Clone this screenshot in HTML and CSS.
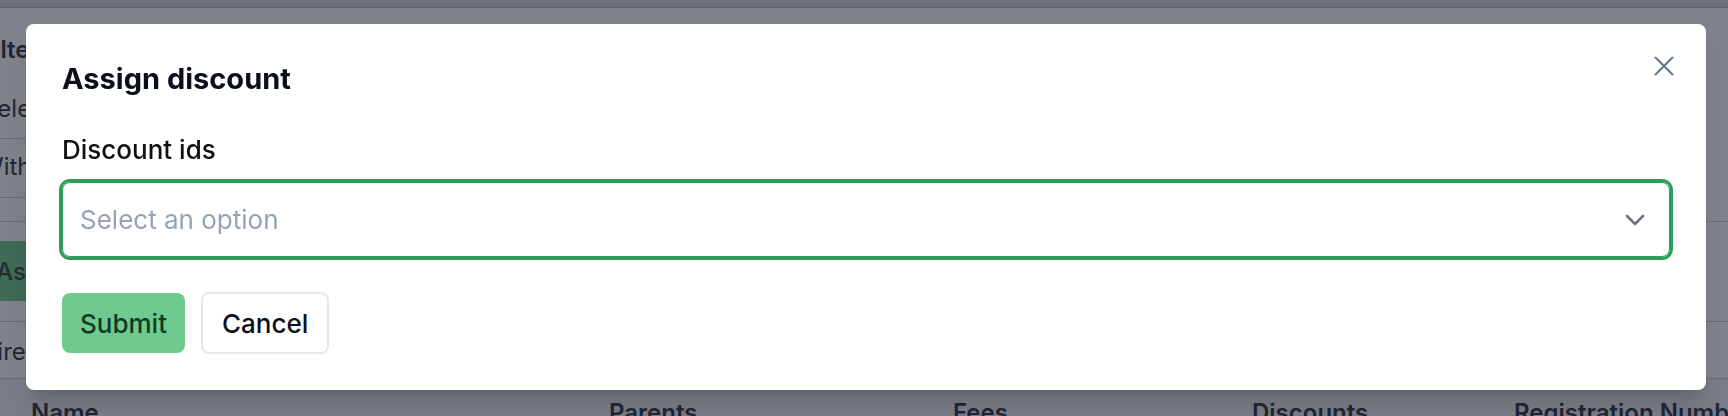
FILE: index.html
```html
<!DOCTYPE html>
<html lang="en">
<head>
  <meta charset="UTF-8">
  <meta name="viewport" content="width=device-width, initial-scale=1">
  <title>Students</title>
  <link rel="stylesheet" href="styles.css">
</head>
<body>
  <div class="page">
    <div class="topbar"></div>
    <div class="filters">
      <h2 class="filters-title">Filters</h2>
      <div class="filter-row first">Deleted</div>
      <div class="filter-row second">With discount</div>
      <div class="spacer-row"></div>
      <div class="bulk-row"><button class="bulk-btn">Assign discount</button></div>
      <div class="filter-row selected">Direct debit</div>
    </div>
    <div class="table-head">
      <span>Name</span>
      <span>Parents</span>
      <span>Fees</span>
      <span>Discounts</span>
      <span>Registration Number</span>
    </div>
  </div>

  <div class="overlay">
    <form class="modal" id="assign-discount">
      <button type="button" class="close" aria-label="Close">
        <svg width="20" height="20" viewBox="0 0 20 20"><path d="M1 1L19 19M19 1L1 19" /></svg>
      </button>
      <h2 class="modal-title">Assign discount</h2>
      <label class="field-label" for="discount_ids">Discount ids</label>
      <div class="select" id="discount_ids" tabindex="0">
        <span class="placeholder">Select an option</span>
        <svg class="chevron" width="20" height="12" viewBox="0 0 20 12"><path d="M2 2l8 8 8-8" /></svg>
      </div>
      <div class="actions">
        <button type="submit" class="btn btn-submit">Submit</button>
        <button type="button" class="btn btn-cancel">Cancel</button>
      </div>
    </form>
  </div>
</body>
</html>
```

FILE: styles.css
```css
body { margin: 0; width: 1728px; height: 416px; overflow: hidden; background: #fff; font-family: Inter, "Noto Sans", sans-serif; color: #111827; }

/* page behind the dialog */
.page { width: 1728px; height: 416px; overflow: hidden; }
.topbar { height: 7px; background: #d6d7da; border-bottom: 1px solid #a9acb3; }
.filters { margin-left: -20px; font-size: 24px; line-height: 30px; white-space: nowrap; }
.filters-title { margin: 0; padding-top: 27px; font-size: 24px; font-weight: 600; line-height: 30px; }
.filter-row { border-bottom: 1px solid #c6c8cd; }
.filter-row.first { width: 420px; height: 44px; padding-top: 29px; }
.filter-row.second { width: 420px; height: 45px; padding-top: 13px; }
.spacer-row { height: 23px; border-bottom: 1px solid #c6c8cd; }
.bulk-row { height: 100px; padding-top: 19px; box-sizing: border-box; border-bottom: 1px solid #c6c8cd; }
.bulk-btn { display: block; height: 60px; padding: 0 16px; border: none; background: #5ec47a; color: #0f2e1c; font: 500 24px Inter, sans-serif; }
.filter-row.selected { height: 41px; padding-top: 15px; }
.table-head { display: grid; grid-template-columns: 578px 344px 299px 262px 1fr; padding: 19px 0 0 31px; background: #f3f3f5; font-size: 24px; font-weight: 600; line-height: 30px; white-space: nowrap; }

/* dialog */
.overlay { position: fixed; inset: 0; display: flex; align-items: flex-start; padding: 24px 22px 0 26px; background: rgba(42, 47, 62, 0.6); }
.modal { position: relative; flex: 1; padding: 36px; background: #fff; border-radius: 8px; box-shadow: 0 20px 25px -5px rgba(0,0,0,0.14), 0 8px 10px -6px rgba(0,0,0,0.12); }
.close { position: absolute; top: 32px; right: 32px; width: 20px; height: 20px; padding: 0; border: none; background: none; cursor: pointer; }
.close svg { display: block; fill: none; stroke: #64748b; stroke-width: 2; }
.modal-title { margin: 0; font-size: 29px; font-weight: 650; line-height: 38px; color: #0b0f19; }
.field-label { display: block; margin-top: 33px; margin-bottom: 13px; font-size: 26px; font-weight: 500; line-height: 38px; color: #0f1115; }
.select { display: flex; align-items: center; justify-content: space-between; height: 75px; box-sizing: border-box; padding: 0 24px 0 17px; border: 1px solid #2d9d5c; border-radius: 8px; box-shadow: 0 0 0 3px #2d9d5c; outline: none; }
.placeholder { font-size: 26px; color: #94a3b8; }
.chevron { fill: none; stroke: #6b7280; stroke-width: 2.5; stroke-linecap: round; stroke-linejoin: round; }
.actions { display: flex; align-items: center; gap: 16px; margin-top: 35px; }
.btn { height: 60px; padding: 0 18px; border: none; border-radius: 8px; font: 500 26px Inter, sans-serif; cursor: pointer; }
.btn-submit { background: #6fca8f; color: #123b24; }
.btn-cancel { height: 62px; padding: 0 19px; background: #fff; color: #0b0f19; border: 2px solid #e5e7eb; }
```
